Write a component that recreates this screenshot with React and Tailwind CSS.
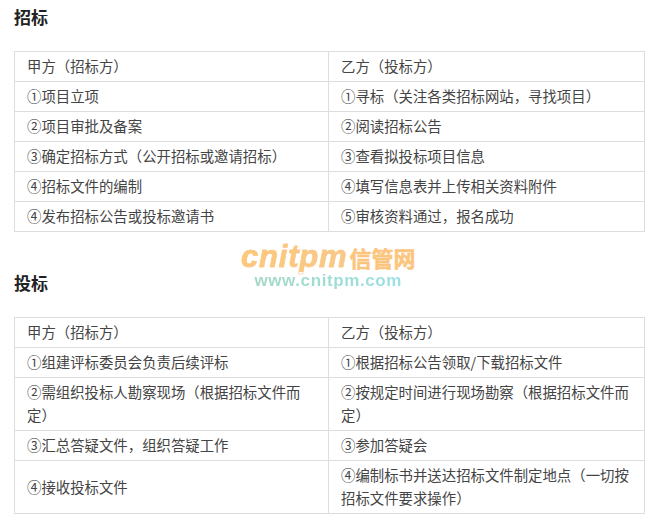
import React from 'react'

const zh = { fontFamily: '"Noto Sans CJK SC", "Liberation Sans", sans-serif' }

const tender = [
  ['甲方（招标方）', '乙方（投标方）'],
  ['①项目立项', '①寻标（关注各类招标网站，寻找项目）'],
  ['②项目审批及备案', '②阅读招标公告'],
  ['③确定招标方式（公开招标或邀请招标）', '③查看拟投标项目信息'],
  ['④招标文件的编制', '④填写信息表并上传相关资料附件'],
  ['④发布招标公告或投标邀请书', '⑤审核资料通过，报名成功'],
]

const bid = [
  ['甲方（招标方）', '乙方（投标方）'],
  ['①组建评标委员会负责后续评标', '①根据招标公告领取/下载招标文件'],
  ['②需组织投标人勘察现场（根据招标文件而定）', '②按规定时间进行现场勘察（根据招标文件而定）'],
  ['③汇总答疑文件，组织答疑工作', '③参加答疑会'],
  ['④接收投标文件', '④编制标书并送达招标文件制定地点（一切按招标文件要求操作）'],
]

function Table({ rows }) {
  return (
    <table className="w-[631px] table-fixed border-collapse text-[14.4px] leading-[23px] text-[#444]">
      <tbody>
        {rows.map((row, i) => (
          <tr key={i}>
            {row.map((cell, j) => (
              <td key={j} className={`border border-[#ddd] pb-[4px] pl-3 pr-[11px] pt-[2px] align-middle ${j === 0 ? 'w-[314px]' : ''}`}>
                {cell}
              </td>
            ))}
          </tr>
        ))}
      </tbody>
    </table>
  )
}

export default function App() {
  return (
    <div className="relative h-[521px] w-[650px] overflow-hidden bg-white pl-[14px] pt-[5px]" style={zh}>
      <h2 className="h-[46px] text-[17px] font-bold leading-[24px] text-[#222]">招标</h2>
      <Table rows={tender} />
      <h2 className="mt-[39px] h-[46px] text-[17px] font-bold leading-[24px] text-[#222]">投标</h2>
      <Table rows={bid} />

      <div className="absolute left-[241px] top-[242px] flex flex-col items-center">
        <div className="flex items-baseline [-webkit-text-stroke:0.5px_#fbc57e]" style={{ fontFamily: '"Liberation Sans", "Noto Sans CJK SC", sans-serif' }}>
          <span className="bg-gradient-to-r from-[#fdc878] to-[#f9c98a] bg-clip-text pr-[2px] text-[31px] font-bold italic leading-[30px] tracking-[0.8px] text-transparent">cnitpm</span>
          <span className="text-[22px] font-bold leading-[30px] text-[#fbc57e]">信管网</span>
        </div>
        <div className="-mt-[3px] bg-gradient-to-r from-[#a5d8c4] to-[#97e0e4] bg-clip-text text-[17px] font-bold leading-[18px] tracking-[0.6px] text-transparent" style={{ fontFamily: '"Liberation Sans", sans-serif' }}>www.cnitpm.com</div>
      </div>
    </div>
  )
}
